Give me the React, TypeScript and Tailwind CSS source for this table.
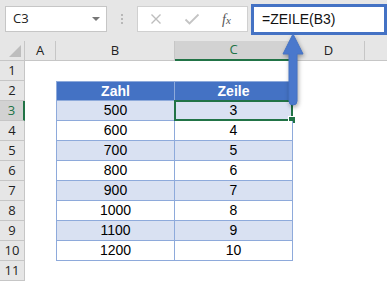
import { ChevronDown } from "lucide-react";

const cols = "grid grid-cols-[25px_31px_119px_118px_72px_1fr]";

const rows: { n: number; zahl?: string; zeile?: string }[] = [
  { n: 1 },
  { n: 2, zahl: "Zahl", zeile: "Zeile" },
  { n: 3, zahl: "500", zeile: "3" },
  { n: 4, zahl: "600", zeile: "4" },
  { n: 5, zahl: "700", zeile: "5" },
  { n: 6, zahl: "800", zeile: "6" },
  { n: 7, zahl: "900", zeile: "7" },
  { n: 8, zahl: "1000", zeile: "8" },
  { n: 9, zahl: "1100", zeile: "9" },
  { n: 10, zahl: "1200", zeile: "10" },
  { n: 11 },
];

const uiFont = { fontFamily: "'Open Sans', 'Noto Sans', sans-serif" };
const cellFont = { fontFamily: "'Liberation Sans', Arial, sans-serif" };

function FormulaBar() {
  return (
    <div className="h-[41px] bg-[#e6e6e6] flex items-start pt-[6px] pl-[5px]" style={uiFont}>
      <div className="w-[102px] h-[26px] bg-white border border-[#c6c6c6] flex items-center justify-between pl-[7px] pr-[5px] text-[13px] text-[#222]">
        <span>C3</span>
        <svg width="10" height="6" viewBox="0 0 10 6">
          <path d="M1 1h8L5 5z" fill="#777" />
        </svg>
      </div>
      <div className="w-[30px] h-[26px] flex flex-col items-center justify-center gap-[2px]">
        <span className="w-[2px] h-[2px] bg-[#b8b8b8]" />
        <span className="w-[2px] h-[2px] bg-[#b8b8b8]" />
        <span className="w-[2px] h-[2px] bg-[#b8b8b8]" />
      </div>
      <div className="w-[111px] h-[26px] bg-white border border-[#d0d0d0] flex items-center pl-[12px]">
        <svg width="12" height="12" viewBox="0 0 12 12">
          <path d="M1.5 1.5l9 9M10.5 1.5l-9 9" stroke="#bdbdbd" strokeWidth="1.4" />
        </svg>
        <svg width="16" height="12" viewBox="0 0 16 12" className="ml-[22px]">
          <path d="M1.5 6.5l4 4 9-9" stroke="#c4c4c4" strokeWidth="1.8" fill="none" />
        </svg>
        <span
          className="ml-[22px] italic text-[14px] text-[#555]"
          style={{ fontFamily: "'Liberation Serif', serif" }}
        >
          f<span className="text-[11px]">x</span>
        </span>
      </div>
      <div className="ml-[3px] -mt-[2px] flex-1 h-[31px] bg-white border-[3px] border-[#4472c4] flex items-center pl-[8px] text-[14px] text-[#111]" style={cellFont}>
        =ZEILE(B3)
      </div>
    </div>
  );
}

function ColumnHeader() {
  const base = "h-5 bg-[#e6e6e6] border-b border-[#c6c6c6] flex items-center justify-center text-[13px] text-[#222]";
  return (
    <div className={cols} style={uiFont}>
      <div className={`${base} relative border-r border-r-[#c6c6c6]`}>
        <svg width="12" height="12" viewBox="0 0 12 12" className="absolute right-[3px] bottom-[3px]">
          <path d="M12 0v12H0z" fill="#bdbdbd" />
        </svg>
      </div>
      <div className={`${base} border-r border-r-[#c6c6c6]`}>A</div>
      <div className={`${base} border-r border-r-[#c6c6c6]`}>B</div>
      <div className="h-5 bg-[#d2d2d2] border-b-2 border-[#217346] border-r border-r-[#c6c6c6] flex items-center justify-center text-[13px] text-[#217346]">
        C
      </div>
      <div className={`${base} border-r border-r-[#c6c6c6]`}>D</div>
      <div className={base} />
    </div>
  );
}

function SheetRow({ n, zahl, zeile }: { n: number; zahl?: string; zeile?: string }) {
  const inTable = zahl !== undefined;
  const isHead = n === 2;
  const isSelected = n === 3;
  const band = isHead ? "bg-[#4472c4] text-white font-bold" : n % 2 === 1 ? "bg-[#d9e1f2]" : "bg-white";
  const tableCell = `h-5 flex items-center justify-center text-[14px] border-b border-r border-[#8eaadb] ${band}`;

  return (
    <div className={cols}>
      {isSelected ? (
        <div className="h-5 bg-[#d2d2d2] border-b border-[#c6c6c6] border-r-2 border-r-[#217346] flex items-center justify-center text-[13px] text-[#217346]" style={uiFont}>
          {n}
        </div>
      ) : (
        <div className="h-5 bg-[#e6e6e6] border-b border-[#c6c6c6] border-r border-r-[#c6c6c6] flex items-center justify-center text-[13px] text-[#222]" style={uiFont}>
          {n}
        </div>
      )}
      <div className="h-5 bg-white" />
      {inTable ? (
        <>
          <div className={`${tableCell} border-l ${isHead ? "border-t" : ""}`} style={cellFont}>
            {zahl}
          </div>
          <div className={`${tableCell} relative ${isHead ? "border-t" : ""}`} style={cellFont}>
            {zeile}
            {isSelected && (
              <>
                <div className="absolute -left-px -top-px -right-px -bottom-px border-2 border-[#217346]" />
                <div className="absolute -right-[4px] -bottom-[4px] w-[6px] h-[6px] bg-[#217346] border border-white box-content" />
              </>
            )}
          </div>
        </>
      ) : (
        <>
          <div className="h-5 bg-white" />
          <div className="h-5 bg-white" />
        </>
      )}
      <div className="h-5 bg-white" />
      <div className="h-5 bg-white" />
    </div>
  );
}

function Arrow() {
  return (
    <svg
      width="30"
      height="80"
      viewBox="0 0 30 80"
      className="absolute left-[278px] top-[32px]"
      style={{ filter: "drop-shadow(1px 2px 2px rgba(0,0,0,0.35))" }}
    >
      <path
        d="M15 2L25 22H19V69a4 4 0 0 1-8 0V22H5z"
        fill="#4a78cc"
        stroke="#4472c4"
        strokeWidth="1"
        strokeLinejoin="round"
      />
    </svg>
  );
}

export default function App() {
  return (
    <div className="relative w-[387px] h-[281px] overflow-hidden bg-white">
      <FormulaBar />
      <ColumnHeader />
      {rows.map((r) => (
        <SheetRow key={r.n} {...r} />
      ))}
      <Arrow />
    </div>
  );
}
